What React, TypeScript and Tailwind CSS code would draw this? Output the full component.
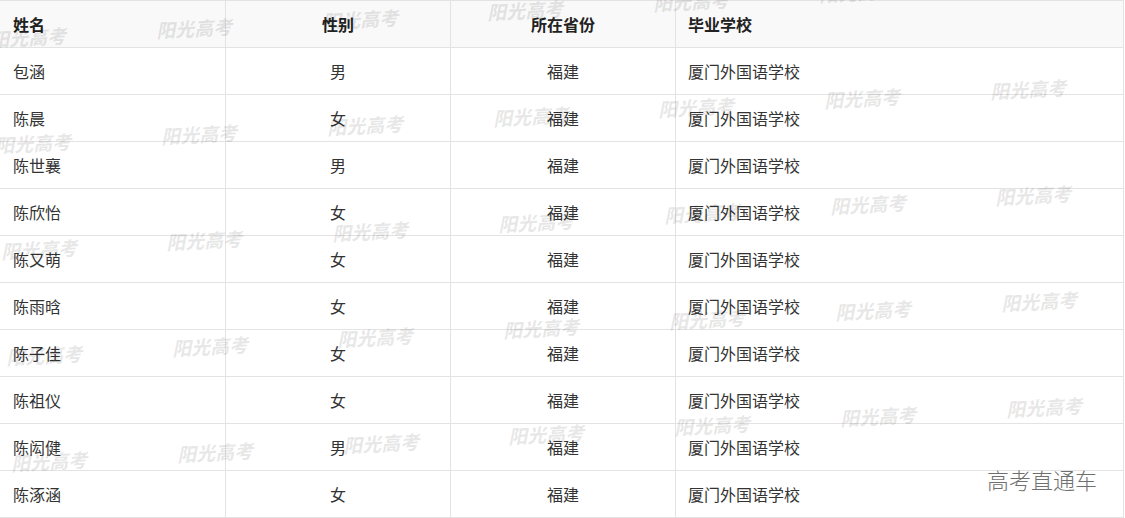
import React from "react";

const rows: [string, string][] = [
  ["包涵", "男"],
  ["陈晨", "女"],
  ["陈世襄", "男"],
  ["陈欣怡", "女"],
  ["陈又萌", "女"],
  ["陈雨晗", "女"],
  ["陈子佳", "女"],
  ["陈祖仪", "女"],
  ["陈闳健", "男"],
  ["陈涿涵", "女"],
];

const font = { fontFamily: '"Noto Sans CJK SC", "Microsoft YaHei", sans-serif' };

function Watermarks() {
  const items: { x: number; y: number }[] = [];
  for (let r = 0; r < 5; r++) {
    for (let c = 0; c < 7; c++) {
      items.push({ x: -10 + 5.25 * r + 165.8 * c, y: 38 + 106 * r - 9 * c });
    }
  }
  return (
    <>
      {items.map((it, i) => (
        <div
          key={i}
          className="absolute pointer-events-none whitespace-nowrap text-[19px] font-black italic leading-none text-black/[0.09] -rotate-3"
          style={{ left: it.x, top: it.y - 11, ...font }}
        >
          阳光高考
        </div>
      ))}
    </>
  );
}

export default function App() {
  return (
    <div className="relative w-[1125px] h-[518px] bg-white overflow-hidden" style={font}>
      <div className="grid grid-cols-[225px_225px_225px_449px] w-[1124px]">
        <div className="h-[47px] border-t border-[#e3e3e3] bg-[#f9f9f9] flex items-center pl-[13px] text-[16px] font-bold text-[#222]">姓名</div>
        <div className="h-[47px] border-t border-l border-[#e3e3e3] bg-[#f9f9f9] flex items-center justify-center text-[16px] font-bold text-[#222]">性别</div>
        <div className="h-[47px] border-t border-l border-[#e3e3e3] bg-[#f9f9f9] flex items-center justify-center text-[16px] font-bold text-[#222]">所在省份</div>
        <div className="h-[47px] border-t border-l border-r border-[#e3e3e3] bg-[#f9f9f9] flex items-center pl-[12px] text-[16px] font-bold text-[#222]">毕业学校</div>
        {rows.map(([name, sex], i) => {
          const last = i === rows.length - 1;
          const b = last ? "h-[48px] border-b" : "h-[47px]";
          return (
            <React.Fragment key={i}>
              <div className={`${b} border-t border-[#e3e3e3] flex items-center pl-[13px] text-[16px] text-[#333]`}>{name}</div>
              <div className={`${b} border-t border-l border-[#e3e3e3] flex items-center justify-center text-[16px] text-[#333]`}>{sex}</div>
              <div className={`${b} border-t border-l border-[#e3e3e3] flex items-center justify-center text-[16px] text-[#333]`}>福建</div>
              <div className={`${b} border-t border-l border-r border-[#e3e3e3] flex items-center pl-[12px] text-[16px] text-[#333]`}>厦门外国语学校</div>
            </React.Fragment>
          );
        })}
      </div>
      <Watermarks />
      <div className="absolute left-[987px] top-[466px] text-[22px] leading-[26px] font-light text-[#707070] whitespace-nowrap">高考直通车</div>
    </div>
  );
}
